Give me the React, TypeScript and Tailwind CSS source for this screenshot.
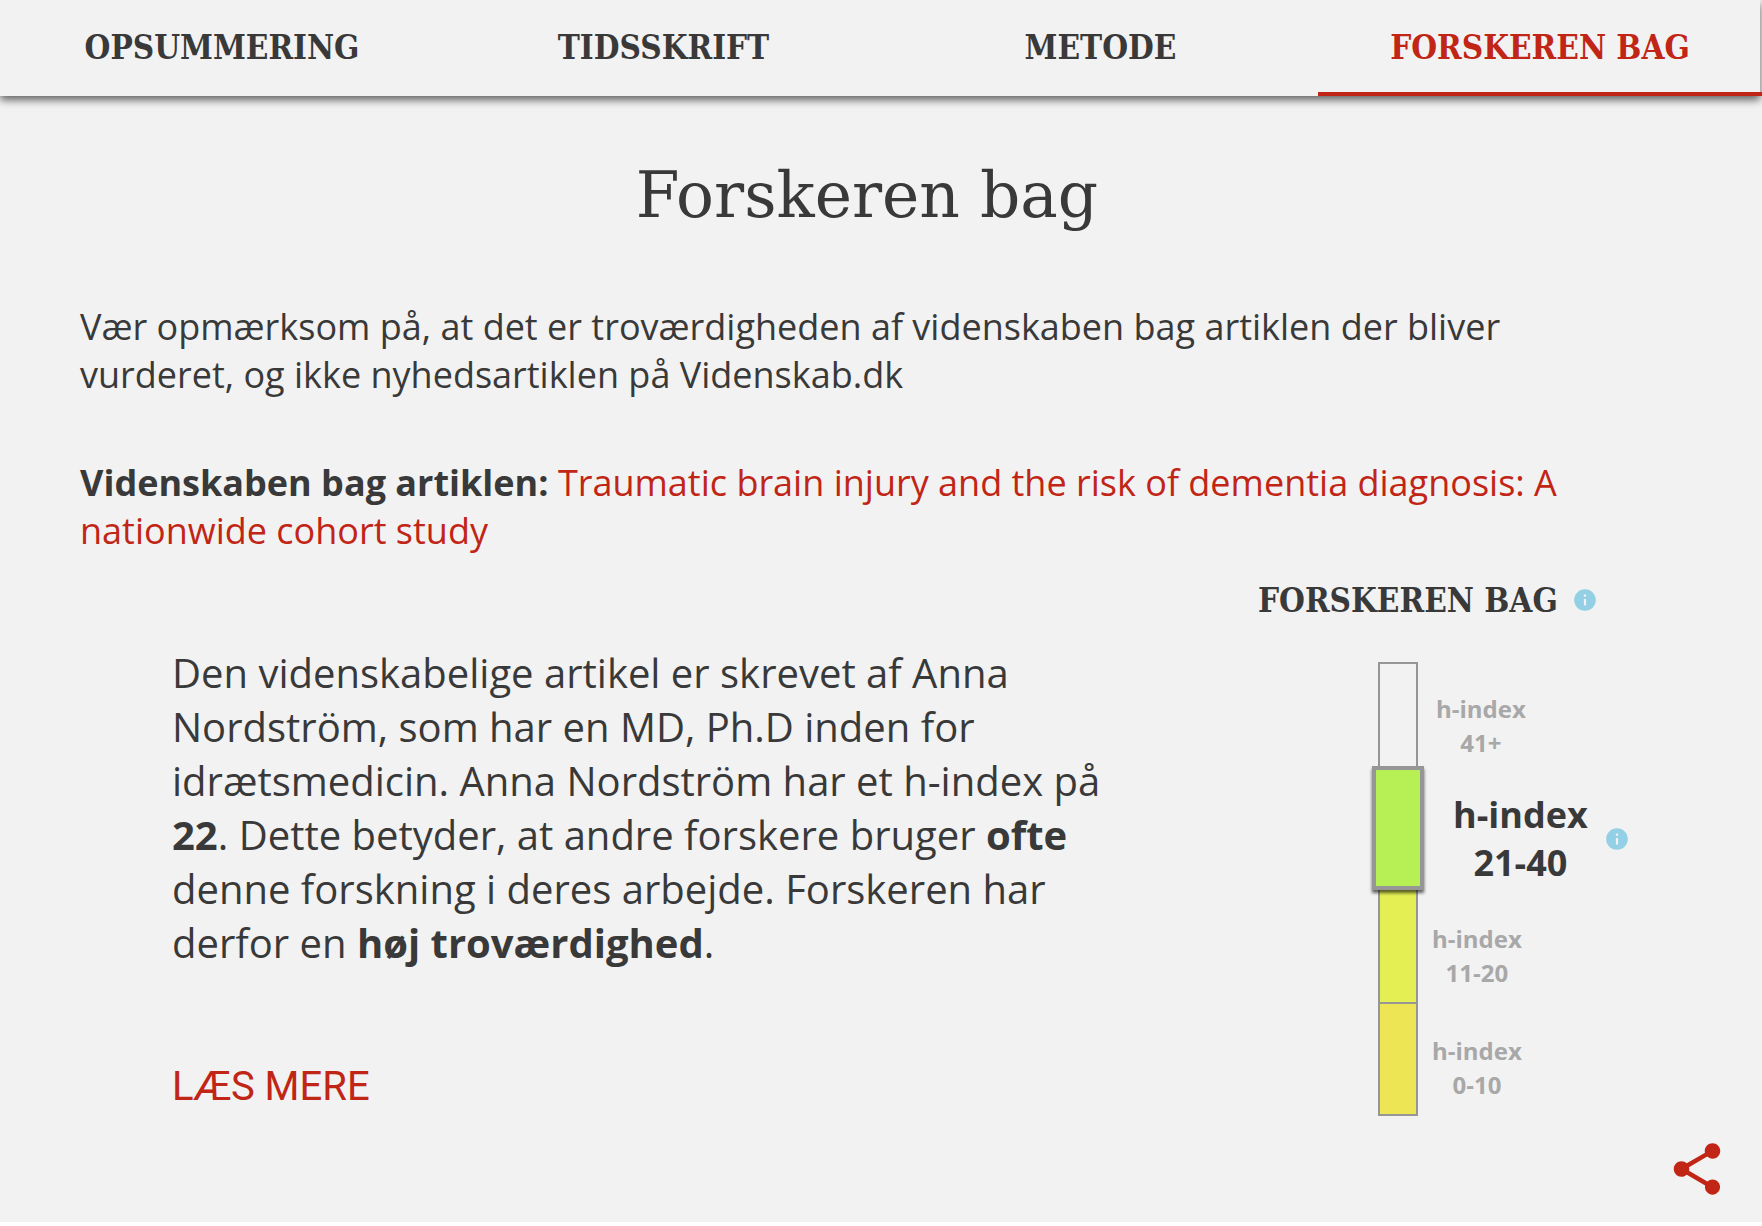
import { MdInfo, MdShare } from "react-icons/md";

const slabBold = "font-['Roboto_Slab','DejaVu_Serif_Condensed','DejaVu_Serif',serif] text-[33px] font-bold";

const tabs = [
  { label: "OPSUMMERING", active: false },
  { label: "TIDSSKRIFT", active: false },
  { label: "METODE", active: false },
  { label: "FORSKEREN BAG", active: true },
];

function InfoButton({ label }: { label: string }) {
  return (
    <button type="button" aria-label={label} className="block text-[#93d0e6]">
      <MdInfo size={26} />
    </button>
  );
}

function Level({ range, bar, pad }: { range: string; bar: string; pad: string }) {
  return (
    <li className="flex">
      <span className={`w-10 shrink-0 border-2 border-[#969696] ${bar}`} />
      <span className={`${pad} text-center text-2xl leading-[34px] font-bold text-[#a8a8a8]`}>
        h-index
        <br />
        {range}
      </span>
    </li>
  );
}

export default function App() {
  return (
    <div className="flex min-h-[calc(100vh-4px)] flex-col bg-[#f2f2f2] font-['Open_Sans',sans-serif] text-[#393939]">
      <header className="mr-0.5 bg-[#f2f2f2] shadow-[0_4px_8px_rgba(0,0,0,0.6)]">
        <nav className={`-mr-0.5 grid h-24 grid-cols-[444fr_439fr_435fr_444fr] ${slabBold}`}>
          {tabs.map((tab) => (
            <a
              key={tab.label}
              href="#"
              aria-current={tab.active ? "page" : undefined}
              className={`flex items-center justify-center border-b-4 pt-1 whitespace-nowrap ${
                tab.active ? "border-[#c12515] text-[#c12515]" : "border-transparent"
              }`}
            >
              {tab.label}
            </a>
          ))}
        </nav>
      </header>

      <main className="flex grow flex-col px-20 pt-[58px]">
        <h1 className="pr-7 text-center font-['Roboto_Slab','DejaVu_Serif',serif] text-[63px] leading-[84px]">
          Forskeren bag
        </h1>

        <p className="mt-[65px] max-w-[1500px] text-4xl leading-12">
          Vær opmærksom på, at det er troværdigheden af videnskaben bag artiklen der bliver vurderet, og ikke
          nyhedsartiklen på Videnskab.dk
        </p>
        <p className="mt-[60px] max-w-[1500px] text-4xl leading-12">
          <strong>Videnskaben bag artiklen:</strong>{" "}
          <a href="#" className="text-[#c12515]">
            Traumatic brain injury and the risk of dementia diagnosis: A nationwide cohort study
          </a>
        </p>

        <div className="flex justify-between">
          <section className="w-[1036px] pt-[91px] pl-[92px] text-[40px] leading-[54px]">
            <p>
              Den videnskabelige artikel er skrevet af Anna Nordström, som har en MD, Ph.D inden for
              idrætsmedicin. Anna Nordström har et h-index på <strong>22</strong>. Dette betyder, at andre
              forskere bruger <strong>ofte</strong> denne forskning i deres arbejde. Forskeren har derfor en{" "}
              <strong>høj troværdighed</strong>.
            </p>
            <a href="#" className="mt-[90px] inline-block font-[Roboto,sans-serif] text-[#c12515]">
              LÆS MERE
            </a>
          </section>

          <section className="w-[424px] pt-5">
            <div className="flex items-center gap-3.5">
              <h2 className={`${slabBold} pt-0.5 leading-12 whitespace-nowrap`}>FORSKEREN BAG</h2>
              <InfoButton label="Om forskeren bag" />
            </div>
            <ul className="mt-[37px] ml-[120px]">
              <Level range="41+" bar="h-[104px] border-b-0" pad="pt-[30px] pl-[18px]" />
              <li className="-ml-1.5 flex">
                <span className="z-10 h-[124px] w-[52px] shrink-0 border-4 border-[#969696] bg-[#b6f055] shadow-[0_3px_3px_rgba(0,0,0,0.6)]" />
                <span className="pt-[25px] pl-[29px] text-center text-4xl leading-12 font-bold">
                  h-index
                  <br />
                  21-40
                </span>
                <span className="pt-[60px] pl-4">
                  <InfoButton label="Om h-index" />
                </span>
              </li>
              <Level range="11-20" bar="h-[114px] border-t-0 bg-[#e3ef53]" pad="pt-8 pl-3.5" />
              <Level range="0-10" bar="h-28 border-t-0 bg-[#ede553]" pad="pt-[30px] pl-3.5" />
            </ul>
          </section>
        </div>
        <div className="mt-auto -mr-[46px] flex justify-end pb-[22px]">
          <button type="button" aria-label="Del" className="text-[#c12515]">
            <MdShare size={62} />
          </button>
        </div>
      </main>
    </div>
  );
}
